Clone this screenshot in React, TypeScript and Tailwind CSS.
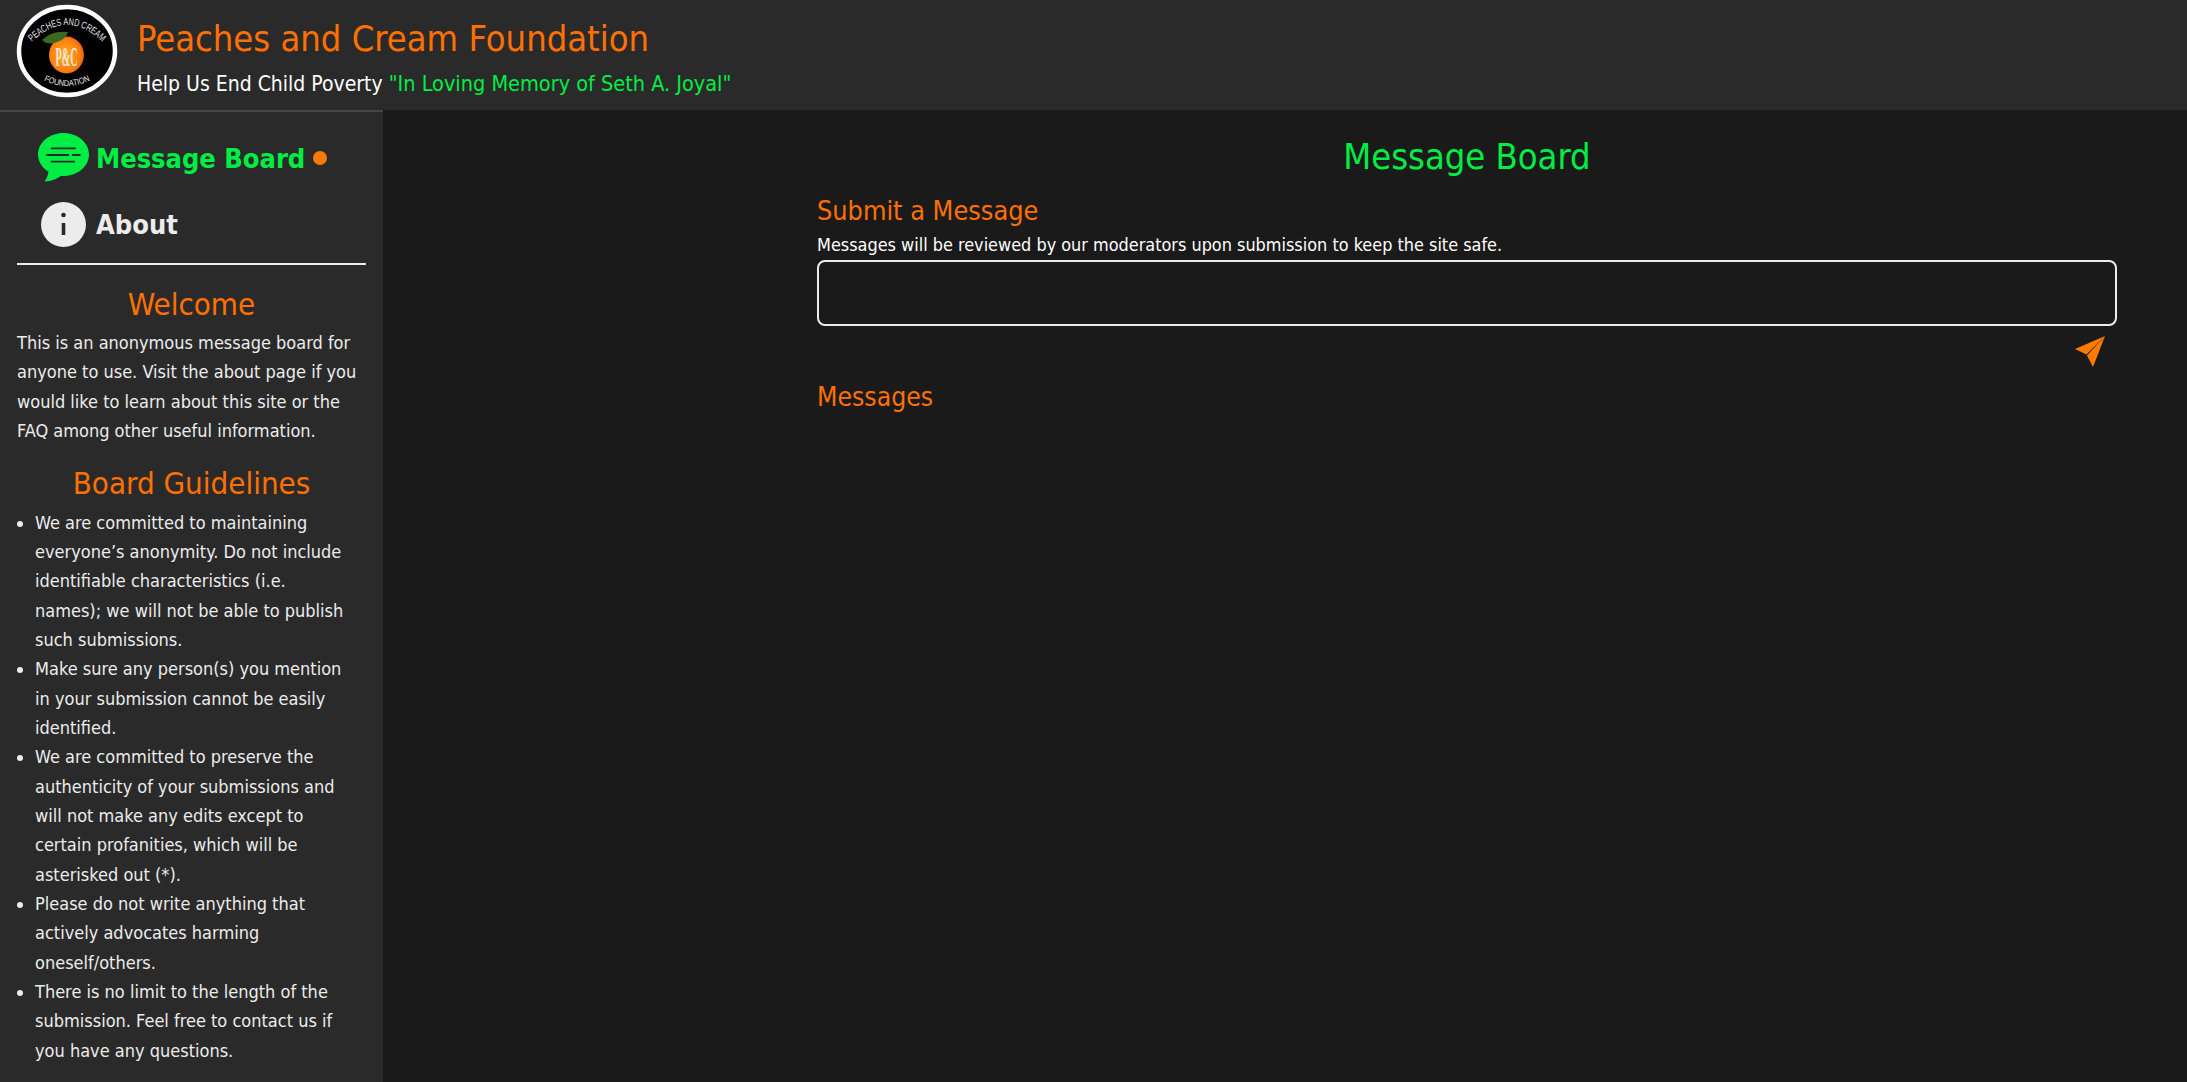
import React from "react";

function Logo() {
  return (
    <svg width="102" height="94" viewBox="0 0 102 94" className="shrink-0">
      <defs>
        <path id="topArc" d="M8 46 Q51 -4 94 46" />
        <path id="botArc" d="M20 72 Q51 92 82 72" />
        <radialGradient id="peach" cx="0.45" cy="0.5" r="0.6">
          <stop offset="0" stopColor="#ffb020" />
          <stop offset="0.75" stopColor="#f97c10" />
          <stop offset="1" stopColor="#d84a10" />
        </radialGradient>
      </defs>
      <ellipse cx="51" cy="47" rx="48" ry="44" fill="#000" stroke="#fff" strokeWidth="4.500" />
      <text fontFamily="'Liberation Sans',sans-serif" fontSize="10" fill="#e5e5e5" textAnchor="middle">
        <textPath href="#topArc" startOffset="50%" textLength="80" lengthAdjust="spacingAndGlyphs">PEACHES AND CREAM</textPath>
      </text>
      <text fontFamily="'Liberation Sans',sans-serif" fontSize="8.500" fill="#e5e5e5" textAnchor="middle">
        <textPath href="#botArc" startOffset="50%" textLength="48" lengthAdjust="spacingAndGlyphs">FOUNDATION</textPath>
      </text>
      <ellipse cx="50.500" cy="51" rx="17.500" ry="18.500" fill="url(#peach)" />
      <path d="M26 36 Q36 26 52 28 Q50 36 38 39 Q31 41 26 36Z" fill="#3a6a22" />
      <text x="50.500" y="62" textAnchor="middle" textLength="22" lengthAdjust="spacingAndGlyphs" fontFamily="'Liberation Serif',serif" fontWeight="700" fontSize="27" fill="#f4e6dc">P&amp;C</text>
    </svg>
  );
}

function ChatIcon() {
  return (
    <svg width="51" height="49" viewBox="0 0 51 49" className="shrink-0">
      <path d="M25.500 0C11.500 0 0 9.500 0 21.500C0 29 4.500 35 10.500 38.800C10 42.500 8.500 46 6.500 48.500C13 48.500 19 46 23 42.800C24 42.900 24.500 43 25.500 43C39.500 43 51 33.500 51 21.500C51 9.500 39.500 0 25.500 0Z" fill="#00ee44" />
      <rect x="12.700" y="14.400" width="25.300" height="1.800" rx="0.900" fill="#2a2a2a" />
      <rect x="8" y="21.100" width="23.300" height="1.800" rx="0.900" fill="#2a2a2a" />
      <rect x="33.700" y="21.100" width="9" height="1.800" rx="0.900" fill="#2a2a2a" />
      <rect x="12.700" y="27.800" width="24.300" height="1.800" rx="0.900" fill="#2a2a2a" />
    </svg>
  );
}

function InfoIcon() {
  return (
    <svg width="45" height="45" viewBox="0 0 45 45" className="shrink-0">
      <circle cx="22.500" cy="22.500" r="22.500" fill="#ececec" />
      <circle cx="22.500" cy="13" r="2.300" fill="#2a2a2a" />
      <rect x="20.700" y="21" width="3.600" height="12" fill="#2a2a2a" />
    </svg>
  );
}

function Plane() {
  return (
    <svg width="30" height="31" viewBox="0 0 30 31">
      <path d="M30 0L0 13L11.500 18.500L30 0Z" fill="#ff7b00" />
      <path d="M30 0L12 19.500L18 31L30 0Z" fill="#ff7b00" />
    </svg>
  );
}

const guidelines = [
  "We are committed to maintaining everyone’s anonymity. Do not include identifiable characteristics (i.e. names); we will not be able to publish such submissions.",
  "Make sure any person(s) you mention in your submission cannot be easily identified.",
  "We are committed to preserve the authenticity of your submissions and will not make any edits except to certain profanities, which will be asterisked out (*).",
  "Please do not write anything that actively advocates harming oneself/others.",
  "There is no limit to the length of the submission. Feel free to contact us if you have any questions.",
];

export default function App() {
  return (
    <div className="h-[1082px] overflow-hidden flex flex-col bg-[#1a1a1a] text-[#ececec] font-['DejaVu_Sans_Condensed','DejaVu_Sans',sans-serif]">
      <header className="h-[110px] shrink-0 bg-[#2a2a2a] flex items-start pl-[16px] pt-[4px] gap-[19px]">
        <Logo />
        <div className="flex flex-col pt-[13px]">
          <div className="text-[36px] leading-[44px] text-[#ff7000]">Peaches and Cream Foundation</div>
          <div className="text-[21px] leading-[30px] mt-[8px] text-white">
            Help Us End Child Poverty <span className="text-[#00ee44] text-[21.500px]">"In Loving Memory of Seth A. Joyal"</span>
          </div>
        </div>
      </header>
      <div className="flex flex-1 min-h-0">
        <aside className="w-[383px] shrink-0 bg-[#2a2a2a] border-t-2 border-[#4a4444] px-[17px] flex flex-col">
          <nav className="h-[153px] shrink-0 border-b-2 border-[#ececec] flex flex-col pt-[21px] pl-[21px]">
            <div className="flex items-center h-[49px] gap-[7px] text-[27px] font-bold text-[#00ee44]">
              <ChatIcon />
              <span className="pt-[3px]">Message Board</span>
              <span className="w-[14px] h-[14px] rounded-full bg-[#ff7b00] ml-[1px]" />
            </div>
            <div className="flex items-center h-[45px] mt-[20px] pl-[3px] gap-[10px] text-[27px] font-bold">
              <InfoIcon />
              <span className="pt-[2px]">About</span>
            </div>
          </nav>
          <h2 className="text-[31px] leading-[40px] text-[#ff7000] text-center mt-[19px]">Welcome</h2>
          <p className="text-[18px] leading-[29.400px] mt-[4px]">
            This is an anonymous message board for anyone to use. Visit the about page if you would like to learn about this site or the FAQ among other useful information.
          </p>
          <h2 className="text-[31px] leading-[40px] text-[#ff7000] text-center mt-[17px]">Board Guidelines</h2>
          <ul className="list-disc pl-[18px] pr-[14px] text-[18px] leading-[29.350px] mt-[5px]">
            {guidelines.map((g) => (
              <li key={g}>{g}</li>
            ))}
          </ul>
        </aside>
        <main className="flex-1 min-w-0 pl-[434px] pr-[70px] pt-[24px]">
          <h1 className="text-[36px] leading-[46px] text-[#00ee44] text-center">Message Board</h1>
          <h2 className="text-[26.800px] leading-[34px] text-[#ff7000] mt-[14px]">Submit a Message</h2>
          <p className="text-[17.900px] leading-[24px] text-white mt-[5px]">
            Messages will be reviewed by our moderators upon submission to keep the site safe.
          </p>
          <div className="h-[66px] border-2 border-[#ececec] rounded-[8px] mt-[3px]" />
          <div className="flex justify-end pr-[12px] mt-[10px] h-[31px]">
            <Plane />
          </div>
          <h2 className="text-[26.300px] leading-[34px] text-[#ff7000] mt-[13px]">Messages</h2>
        </main>
      </div>
    </div>
  );
}
